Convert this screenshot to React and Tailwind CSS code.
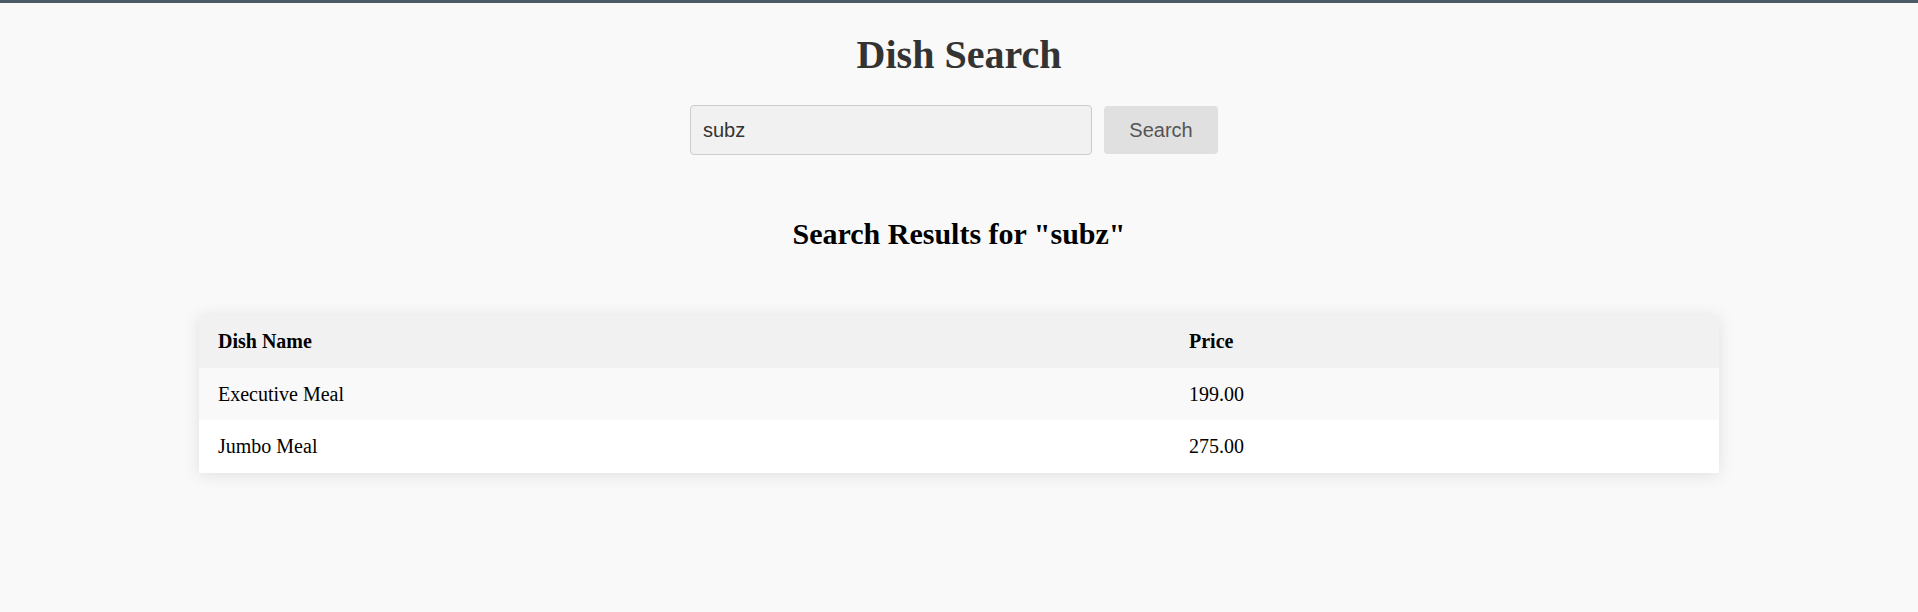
import React, { useState } from 'react';

const dishes = [
  { name: 'Executive Meal', price: '199.00' },
  { name: 'Jumbo Meal', price: '275.00' },
];

const App = () => {
  const [query, setQuery] = useState('subz');

  return (
    <div className="min-h-screen w-full bg-[#f9f9f9] border-t-[3px] border-[#4a5a66] font-['Liberation_Serif',serif] pt-[32px]">
      <h1 className="text-center text-[40px] leading-[40px] font-bold text-[#333]">Dish Search</h1>

      <form
        className="mt-[30px] flex justify-center items-center gap-[12px] pr-[10px]"
        onSubmit={(e) => e.preventDefault()}
      >
        <input
          type="text"
          value={query}
          onChange={(e) => setQuery(e.target.value)}
          className="w-[402px] h-[50px] px-[12px] bg-[#f1f1f1] border border-[#cccccc] rounded-[4px] text-[20px] text-[#333] font-['Liberation_Sans',Arial,sans-serif] outline-none"
        />
        <button
          type="submit"
          className="w-[114px] h-[48px] bg-[#e0e0e0] rounded-[4px] text-[20px] text-[#555] font-['Liberation_Sans',Arial,sans-serif]"
        >
          Search
        </button>
      </form>

      <h2 className="mt-[64px] text-center text-[30px] leading-[30px] font-bold text-black">
        Search Results for "subz"
      </h2>

      <table className="mt-[66px] mx-auto w-[1520px] border-collapse shadow-[0_2px_16px_rgba(0,0,0,0.1)] text-[20px] text-black">
        <thead>
          <tr className="bg-[#f1f1f1]">
            <th className="w-[971px] text-left font-bold px-[19px] py-[15px] leading-[22.7px]">Dish Name</th>
            <th className="text-left font-bold px-[19px] py-[15px] leading-[22.7px]">Price</th>
          </tr>
        </thead>
        <tbody>
          {dishes.map((d, i) => (
            <tr key={d.name} className={i % 2 === 0 ? 'bg-[#f9f9f9]' : 'bg-white'}>
              <td className="px-[19px] py-[15px] leading-[22.7px]">{d.name}</td>
              <td className="px-[19px] py-[15px] leading-[22.7px]">{d.price}</td>
            </tr>
          ))}
        </tbody>
      </table>
    </div>
  );
};

export default App;
